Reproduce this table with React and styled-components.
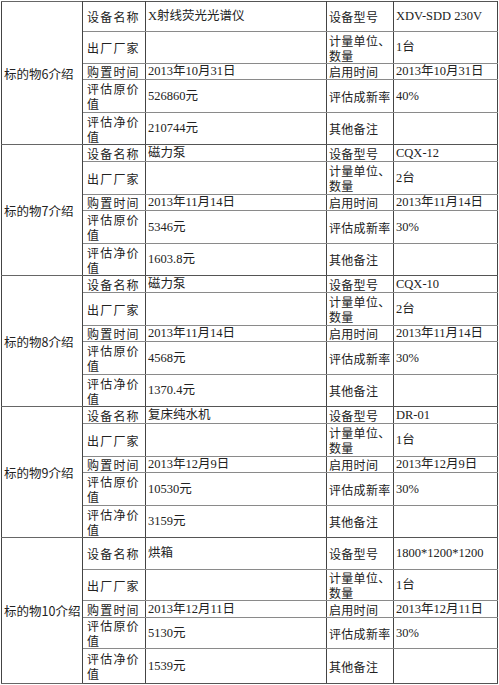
import React from "react";
import styled, { createGlobalStyle } from "styled-components";

const Global = createGlobalStyle`
  html, body { margin: 0; padding: 0; background: #fff; }
  body { font-family: "Noto Sans CJK SC", sans-serif; color: #222; }
`;

const Table = styled.table`
  border-collapse: collapse;
  table-layout: fixed;
  width: 497px;
  margin: 1px 0 0 1px;
  border: 1px solid #555;
`;

const Col = styled.col`
  width: ${(p) => p.$w}px;
`;

const Row = styled.tr`
  height: ${(p) => p.$h}px;
`;

const Cell = styled.td`
  padding: 0 0 0 3px;
  vertical-align: middle;
  font-size: 12px;
  line-height: 15px;
  border-left: 1px solid #444;
  border-right: 1px solid #444;
  border-top: 1px solid ${(p) => (p.$first ? "#555" : "#8a8a8a")};
  border-bottom: 1px solid ${(p) => (p.$last ? "#555" : "#8a8a8a")};
  overflow: hidden;
`;

const GroupCell = styled(Cell)`
  padding-left: 2px;
  border-top: 1px solid #666;
  border-bottom: 1px solid #666;
  font-size: 12.5px;
  white-space: nowrap;
`;

const LabelCell = styled(Cell)`
  padding-left: ${(p) => (p.$wide ? 4 : 2)}px;
  letter-spacing: ${(p) => (p.$wide ? "1.2px" : "0.3px")};
`;

const ValueCell = styled(Cell)`
  padding-left: 2px;
  font-family: "Liberation Serif", "Noto Sans CJK SC", serif;
  font-size: 12.5px;
  white-space: nowrap;
`;

const groups = [
  {
    title: "标的物6介绍",
    name: "X射线荧光光谱仪",
    model: "XDV-SDD 230V",
    qty: "1台",
    date: "2013年10月31日",
    orig: "526860元",
    rate: "40%",
    net: "210744元",
    heights: [30, 32, 16, 33, 32],
  },
  {
    title: "标的物7介绍",
    name: "磁力泵",
    model: "CQX-12",
    qty: "2台",
    date: "2013年11月14日",
    orig: "5346元",
    rate: "30%",
    net: "1603.8元",
    heights: [17, 33, 15, 33, 32],
  },
  {
    title: "标的物8介绍",
    name: "磁力泵",
    model: "CQX-10",
    qty: "2台",
    date: "2013年11月14日",
    orig: "4568元",
    rate: "30%",
    net: "1370.4元",
    heights: [17, 33, 15, 33, 32],
  },
  {
    title: "标的物9介绍",
    name: "复床纯水机",
    model: "DR-01",
    qty: "1台",
    date: "2013年12月9日",
    orig: "10530元",
    rate: "30%",
    net: "3159元",
    heights: [17, 33, 16, 33, 32],
  },
  {
    title: "标的物10介绍",
    name: "烘箱",
    model: "1800*1200*1200",
    qty: "1台",
    date: "2013年12月11日",
    orig: "5130元",
    rate: "30%",
    net: "1539元",
    heights: [32, 31, 17, 31, 35],
  },
];

const widths = [81, 63, 181, 67, 104];

function Group({ g }) {
  const rows = [
    ["设备名称", g.name, "设备型号", g.model],
    ["出厂厂家", "", "计量单位、数量", g.qty],
    ["购置时间", g.date, "启用时间", g.date],
    ["评估原价值", g.orig, "评估成新率", g.rate],
    ["评估净价值", g.net, "其他备注", ""],
  ];
  return rows.map((r, i) => {
    const first = i === 0;
    const last = i === rows.length - 1;
    return (
      <Row key={i} $h={g.heights[i]}>
        {first && <GroupCell rowSpan={5}>{g.title}</GroupCell>}
        <LabelCell $first={first} $last={last} $wide>
          {r[0]}
        </LabelCell>
        <ValueCell $first={first} $last={last}>
          {r[1]}
        </ValueCell>
        <LabelCell $first={first} $last={last}>
          {r[2]}
        </LabelCell>
        <ValueCell $first={first} $last={last}>
          {r[3]}
        </ValueCell>
      </Row>
    );
  });
}

export default function App() {
  return (
    <>
      <Global />
      <Table>
        <colgroup>
          {widths.map((w, i) => (
            <Col key={i} $w={w} />
          ))}
        </colgroup>
        <tbody>
          {groups.map((g, i) => (
            <Group key={i} g={g} />
          ))}
        </tbody>
      </Table>
    </>
  );
}
